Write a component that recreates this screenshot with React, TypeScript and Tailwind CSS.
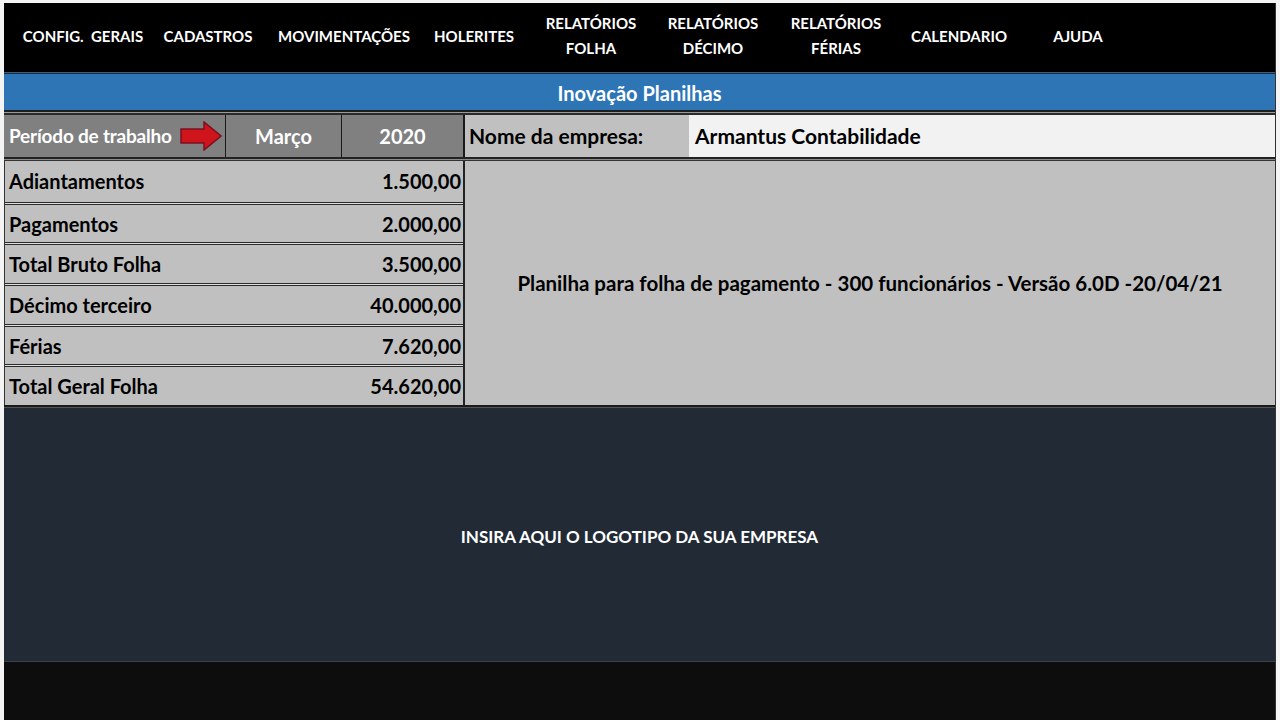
import React from "react";

const font = { fontFamily: "Lato, 'Noto Sans', sans-serif" };

type NavItem = { lines: string[]; w: string };

const navItems: NavItem[] = [
  { lines: ["CONFIG.  GERAIS"], w: "w-[126px]" },
  { lines: ["CADASTROS"], w: "w-[124px]" },
  { lines: ["MOVIMENTAÇÕES"], w: "w-[148px]" },
  { lines: ["HOLERITES"], w: "w-[112px]" },
  { lines: ["RELATÓRIOS", "FOLHA"], w: "w-[122px]" },
  { lines: ["RELATÓRIOS", "DÉCIMO"], w: "w-[122px]" },
  { lines: ["RELATÓRIOS", "FÉRIAS"], w: "w-[124px]" },
  { lines: ["CALENDARIO"], w: "w-[122px]" },
  { lines: ["AJUDA"], w: "w-[116px]" },
];

const totals = [
  { label: "Adiantamentos", value: "1.500,00" },
  { label: "Pagamentos", value: "2.000,00" },
  { label: "Total Bruto Folha", value: "3.500,00" },
  { label: "Décimo terceiro", value: "40.000,00" },
  { label: "Férias", value: "7.620,00" },
  { label: "Total Geral Folha", value: "54.620,00" },
];

function RedArrow() {
  return (
    <svg width="42" height="30" viewBox="0 0 42 30" className="shrink-0 ml-auto mr-[3px]">
      <path
        d="M1 8 H24 V1 L41 15 L24 29 V22 H1 Z"
        fill="#d0141c"
        stroke="#7a1020"
        strokeWidth="1.5"
      />
    </svg>
  );
}

export default function App() {
  return (
    <div className="w-[1280px] h-[720px] bg-[#f4f4f4] pt-[3px] pl-[4px] pr-[4px] overflow-hidden" style={font}>
      <div className="flex flex-col h-full border-r border-[#333]">
        {/* top menu */}
        <nav className="h-[69px] bg-black flex items-center pl-[16px] pb-[3px] text-white font-bold text-[15px] leading-[25px]">
          {navItems.map((item) => (
            <div key={item.lines.join("-")} className={`${item.w} flex flex-col items-center text-center whitespace-pre`}>
              {item.lines.map((l) => (
                <span key={l}>{l}</span>
              ))}
            </div>
          ))}
        </nav>
        <div className="h-[1px] bg-[#3c5f88]" />
        <div className="h-[1px] bg-[#1b2a3c]" />

        {/* title bar */}
        <div className="h-[36px] bg-[#2e75b6] flex items-center justify-center text-white font-bold text-[20px] pt-[1px]">
          Inovação Planilhas
        </div>
        <div className="h-[2px] bg-[#1e1e1e]" />
        <div className="h-[1px] bg-[#9a9a9a]" />
        <div className="h-[2px] bg-[#2a2a2a]" />

        {/* period / company row */}
        <div className="h-[42px] flex text-[20px] font-bold">
          <div className="w-[222px] bg-[#808080] text-white flex items-center pl-[5px] border-r border-[#1a1a1a] whitespace-nowrap">
            <span className="text-[19px] tracking-[-0.2px]">Período de trabalho</span>
            <RedArrow />
          </div>
          <div className="w-[116px] bg-[#808080] text-white flex items-center justify-center border-r border-[#1a1a1a]">
            Março
          </div>
          <div className="w-[123px] bg-[#808080] text-white flex items-center justify-center border-r-2 border-[#1a1a1a]">
            2020
          </div>
          <div className="w-[224px] bg-[#c0c0c0] text-black flex items-center pl-[4px] text-[21px]">Nome da empresa:</div>
          <div className="flex-1 bg-[#f2f2f2] text-black flex items-center pl-[6px] text-[21px]">Armantus Contabilidade</div>
        </div>
        <div className="h-[2px] bg-[#222]" />
        <div className="h-[1px] bg-[#8a8a8a]" />
        <div className="h-[1px] bg-[#333]" />

        {/* totals + version */}
        <div className="h-[244px] flex text-[20px] font-bold text-black">
          <div className="w-[461px] flex flex-col border-l border-[#333] border-r-2 border-r-[#222]">
            {totals.map((t, i) => (
              <div key={t.label} className="flex-1 flex flex-col">
                {i > 0 && (
                  <>
                    <div className="h-[1px] bg-[#2a2a2a]" />
                    <div className="h-[1px] bg-[#e0e0e0]" />
                    <div className="h-[1px] bg-[#2a2a2a]" />
                  </>
                )}
                <div className="flex-1 bg-[#c0c0c0] flex items-center justify-between pl-[4px] pr-[2px]">
                  <span>{t.label}</span>
                  <span>{t.value}</span>
                </div>
              </div>
            ))}
          </div>
          <div className="flex-1 bg-[#c0c0c0] flex items-center justify-center text-[20.5px]">
            Planilha para folha de pagamento - 300 funcionários - Versão 6.0D -20/04/21
          </div>
        </div>
        <div className="h-[2px] bg-[#1a1a1a]" />
        <div className="h-[1px] bg-[#555]" />

        {/* logo placeholder */}
        <div className="h-[254px] bg-[#222a35] flex items-center justify-center text-white font-bold text-[17px] pt-[4px] border-b border-[#3a4250]">
          INSIRA AQUI O LOGOTIPO DA SUA EMPRESA
        </div>
        <div className="flex-1 bg-[#0d0d0d]" />
      </div>
    </div>
  );
}
